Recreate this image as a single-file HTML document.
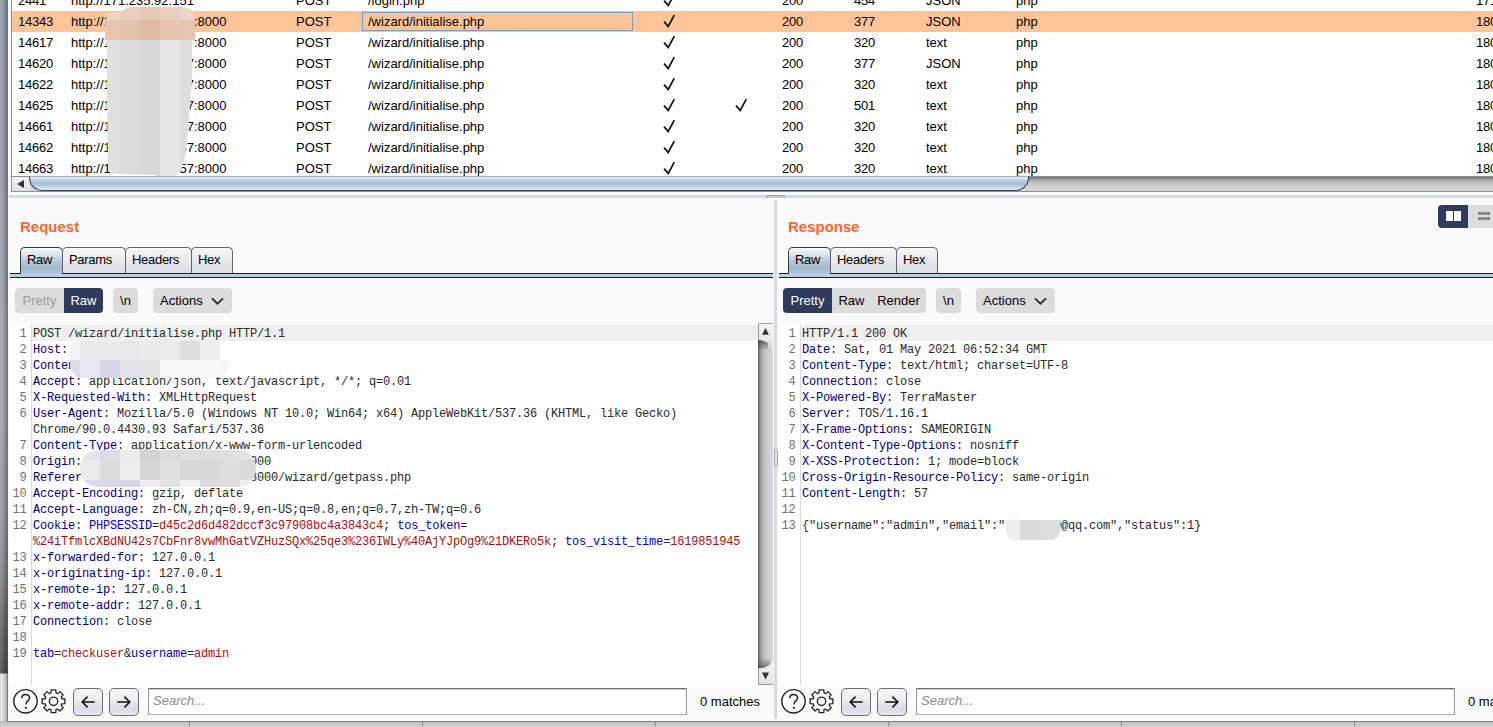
<!DOCTYPE html>
<html>
<head>
<meta charset="utf-8">
<title>Burp Suite</title>
<style>
*{box-sizing:border-box;margin:0;padding:0}
html,body{width:1493px;height:727px;overflow:hidden}
body{position:relative;background:#fafafa;font-family:"Liberation Sans",sans-serif;font-size:13px;color:#000}
.abs{position:absolute}
/* desktop strip on the left & bottom */
#leftstrip{left:0;top:0;width:8px;height:727px;background:linear-gradient(to right,rgba(255,255,255,.14) 0,rgba(255,255,255,.06) 3px,rgba(0,0,0,.12) 5px,rgba(0,0,0,.24) 8px),linear-gradient(to bottom,#8e98a8 0,#929baa 180px,#98a0ae 400px,#9398a3 500px,#86898f 560px,#737479 600px,#5b5a5d 640px,#4c4a4c 673px,#dcdcd8 674px,#dcdcd8 727px)}
#winedge{left:7px;top:0;width:1px;height:722px;background:linear-gradient(to bottom,#6c717a 0,#6c717a 500px,#555 640px,#4a4a4a 673px,#777 674px)}
#bottomstrip{left:0;top:721px;width:1493px;height:6px;background:linear-gradient(to bottom,#bcbeb8,#cfd2cc)}
#bottomline{left:7px;top:721px;width:1486px;height:1px;background:#7e7e7e}
.bsep{top:722px;width:1px;height:4px;background:#8a8a8a}
/* table */
#table{left:11px;top:0;width:1482px;height:176px;background:#fff;border-left:1px solid #8a8f98;overflow:hidden}
.row{position:absolute;left:0;width:1483px;height:21px;line-height:21px;white-space:nowrap}
.row.sel{background:#ffc599}
.row span{position:absolute;top:0}
.c1{left:6px}.c2{left:59px}.c3{left:284px}.c4{left:356px}.c5{left:651px}.c6{left:723px}.c7{left:770px}.c8{left:842px}.c9{left:914px}.c10{left:1004px}.c11{left:1464px}.c1,.c7,.c8,.c11{letter-spacing:-0.25px}
.ck{position:absolute;left:0;top:3px}
#focus{left:362px;top:12px;width:271px;height:19px;border:1px solid #7a9ccc}
.blob{border-radius:14px}
/* h scrollbar */
#hsb{left:11px;top:176px;width:1482px;height:16px;border:1px solid #8e8f96;border-right:0;background:linear-gradient(to bottom,#707075 0,#b4b5ba 4px,#cfd0d4 9px,#d6d7db 14px)}
#hsbbtn{left:12px;top:177px;width:18px;height:14px;background:linear-gradient(to bottom,#f4f4f6,#e0e1e6)}
#hsbthumb{left:29px;top:176px;width:1000px;height:15px;border:1px solid #33475c;border-top-color:#9fb0c0;border-radius:0 0 14px 14px/0 0 13px 13px;background:linear-gradient(to bottom,#e4edf4 0,#b7c9dc 4px,#a9bed4 7px,#cfdeea 11px,#eaf3fa 14px)}
#hsbarrow{left:17px;top:180px;width:0;height:0;border-right:7px solid #333;border-top:4px solid transparent;border-bottom:4px solid transparent}
#split1{left:9px;top:195px;width:1484px;height:3px;background:#d6dae3}
/* panes */
.title{font-weight:bold;font-size:15px;color:#ff6633;line-height:18px}
.tab{position:absolute;top:247px;height:26px;border:1px solid #5e646c;border-bottom:0;border-radius:5px 5px 0 0;background:linear-gradient(to bottom,#f6f6f8 0,#e9eaef 50%,#dcdee5 100%);line-height:24px;text-align:left;padding-left:6px;font-size:13px;letter-spacing:-0.3px;box-shadow:inset 0 1px 0 rgba(255,255,255,.8)}
.tab.on{border-color:#2a3a4a;background:linear-gradient(to bottom,#f6f8fb 0,#dbe4ec 25%,#b7c8d9 50%,#a3b8cd 80%,#b4c9de 100%);height:27px}
.tabline{position:absolute;top:273px;height:5px;border-top:1px solid #15202c;border-bottom:1px solid #15202c;background:#b9cfe6}
.btn{position:absolute;top:288px;height:25px;line-height:25px;background:#dcdcdc;border-radius:4px;font-size:13px;text-align:center;color:#000;white-space:nowrap}
.btn.dark{background:#303a5c;color:#fff}
.btn.dis{color:#9a9a9a}
/* editor */
.ed{position:absolute;background:#fff;overflow:hidden}
.ed .hl{position:absolute;left:22px;right:0;top:1px;height:16px;background:#efefef}
.ed .gsep{position:absolute;left:21px;top:0;width:1px;bottom:0;background:#dcdcdc}
.ln{position:absolute;left:0;width:16.5px;text-align:right;color:#707070;margin-top:1px}
.code,.ln{font-family:"Liberation Mono",monospace;font-size:12px;letter-spacing:-0.2px;line-height:16px;white-space:pre;height:16px}
.code{position:absolute;left:23px;color:#2a2a2a;margin-top:1px}
.h{color:#00007c}.b{color:#0000cc}.r{color:#a31212}
/* v scrollbar */
.vsb{position:absolute;width:14px;background:linear-gradient(to right,#77777c 0,#b4b5ba 4px,#cfd0d4 9px,#d6d7db 13px)}
/* bottom bar */
.navbtn{position:absolute;top:688px;width:30px;height:28px;border:1px solid #6a6f78;border-radius:5px;background:linear-gradient(to bottom,#f6f7f9 0,#eceef2 40%,#d9dce4 75%,#e6e8ee 100%)}
.search{position:absolute;top:688px;height:27px;border:1px solid #9c9c9c;border-top-color:#707070;border-bottom-color:#aaa;background:#fff;font-style:italic;color:#8c8c8c;line-height:24px;padding-left:4px;font-size:13px;box-shadow:inset 0 1px 1px #c4c4c4}
.matches{position:absolute;top:688px;line-height:27px;font-size:13px;white-space:nowrap}
</style>
</head>
<body>
<div id="leftstrip" class="abs"></div>
<div id="bottomstrip" class="abs"></div>
<div id="winedge" class="abs"></div>
<div id="bottomline" class="abs"></div>
<div class="abs bsep" style="left:189px"></div>
<div class="abs bsep" style="left:422px"></div>
<div class="abs bsep" style="left:655px"></div>
<div class="abs bsep" style="left:888px"></div>
<div class="abs bsep" style="left:1121px"></div>
<div class="abs bsep" style="left:1354px"></div>

<!-- proxy history table -->
<div id="table" class="abs">
  <div class="row" style="top:-10px"><span class="c1">2441</span><span class="c2">http://171.235.92.151</span><span class="c3">POST</span><span class="c4">/login.php</span><span class="c5"><svg class="ck" width="13" height="14" viewBox="0 0 13 14"><path d="M1 7.6 L5.2 12.4 L11.3 1.2" fill="none" stroke="#111" stroke-width="1.7" stroke-linejoin="miter"/></svg></span><span class="c7">200</span><span class="c8">454</span><span class="c9">JSON</span><span class="c10">php</span><span class="c11">171</span></div>
  <div class="row sel" style="top:11px"><span class="c1">14343</span><span class="c2">http://171.235.92.157:8000</span><span class="c3">POST</span><span class="c4">/wizard/initialise.php</span><span class="c5"><svg class="ck" width="13" height="14" viewBox="0 0 13 14"><path d="M1 7.6 L5.2 12.4 L11.3 1.2" fill="none" stroke="#111" stroke-width="1.7" stroke-linejoin="miter"/></svg></span><span class="c7">200</span><span class="c8">377</span><span class="c9">JSON</span><span class="c10">php</span><span class="c11">180</span></div>
  <div class="row" style="top:32px"><span class="c1">14617</span><span class="c2">http://171.235.92.157:8000</span><span class="c3">POST</span><span class="c4">/wizard/initialise.php</span><span class="c5"><svg class="ck" width="13" height="14" viewBox="0 0 13 14"><path d="M1 7.6 L5.2 12.4 L11.3 1.2" fill="none" stroke="#111" stroke-width="1.7" stroke-linejoin="miter"/></svg></span><span class="c7">200</span><span class="c8">320</span><span class="c9">text</span><span class="c10">php</span><span class="c11">180</span></div>
  <div class="row" style="top:53px"><span class="c1">14620</span><span class="c2">http://171.235.92.157:8000</span><span class="c3">POST</span><span class="c4">/wizard/initialise.php</span><span class="c5"><svg class="ck" width="13" height="14" viewBox="0 0 13 14"><path d="M1 7.6 L5.2 12.4 L11.3 1.2" fill="none" stroke="#111" stroke-width="1.7" stroke-linejoin="miter"/></svg></span><span class="c7">200</span><span class="c8">377</span><span class="c9">JSON</span><span class="c10">php</span><span class="c11">180</span></div>
  <div class="row" style="top:74px"><span class="c1">14622</span><span class="c2">http://171.235.92.157:8000</span><span class="c3">POST</span><span class="c4">/wizard/initialise.php</span><span class="c5"><svg class="ck" width="13" height="14" viewBox="0 0 13 14"><path d="M1 7.6 L5.2 12.4 L11.3 1.2" fill="none" stroke="#111" stroke-width="1.7" stroke-linejoin="miter"/></svg></span><span class="c7">200</span><span class="c8">320</span><span class="c9">text</span><span class="c10">php</span><span class="c11">180</span></div>
  <div class="row" style="top:95px"><span class="c1">14625</span><span class="c2">http://171.235.92.157:8000</span><span class="c3">POST</span><span class="c4">/wizard/initialise.php</span><span class="c5"><svg class="ck" width="13" height="14" viewBox="0 0 13 14"><path d="M1 7.6 L5.2 12.4 L11.3 1.2" fill="none" stroke="#111" stroke-width="1.7" stroke-linejoin="miter"/></svg></span><span class="c6"><svg class="ck" width="13" height="14" viewBox="0 0 13 14"><path d="M1 7.6 L5.2 12.4 L11.3 1.2" fill="none" stroke="#111" stroke-width="1.7" stroke-linejoin="miter"/></svg></span><span class="c7">200</span><span class="c8">501</span><span class="c9">text</span><span class="c10">php</span><span class="c11">180</span></div>
  <div class="row" style="top:116px"><span class="c1">14661</span><span class="c2">http://171.235.92.157:8000</span><span class="c3">POST</span><span class="c4">/wizard/initialise.php</span><span class="c5"><svg class="ck" width="13" height="14" viewBox="0 0 13 14"><path d="M1 7.6 L5.2 12.4 L11.3 1.2" fill="none" stroke="#111" stroke-width="1.7" stroke-linejoin="miter"/></svg></span><span class="c7">200</span><span class="c8">320</span><span class="c9">text</span><span class="c10">php</span><span class="c11">180</span></div>
  <div class="row" style="top:137px"><span class="c1">14662</span><span class="c2">http://171.235.92.157:8000</span><span class="c3">POST</span><span class="c4">/wizard/initialise.php</span><span class="c5"><svg class="ck" width="13" height="14" viewBox="0 0 13 14"><path d="M1 7.6 L5.2 12.4 L11.3 1.2" fill="none" stroke="#111" stroke-width="1.7" stroke-linejoin="miter"/></svg></span><span class="c7">200</span><span class="c8">320</span><span class="c9">text</span><span class="c10">php</span><span class="c11">180</span></div>
  <div class="row" style="top:158px"><span class="c1">14663</span><span class="c2">http://171.235.92.157:8000</span><span class="c3">POST</span><span class="c4">/wizard/initialise.php</span><span class="c5"><svg class="ck" width="13" height="14" viewBox="0 0 13 14"><path d="M1 7.6 L5.2 12.4 L11.3 1.2" fill="none" stroke="#111" stroke-width="1.7" stroke-linejoin="miter"/></svg></span><span class="c7">200</span><span class="c8">320</span><span class="c9">text</span><span class="c10">php</span><span class="c11">180</span></div>
</div>
<div id="focus" class="abs"></div>
<!-- redaction blobs over host column -->
<div class="abs" style="left:105px;top:7px;width:90px;height:171px;overflow:hidden;clip-path:polygon(25px 0,80px 0,87px 3px,90px 10px,90px 33px,87px 35px,87px 73px,85px 100px,83px 123px,80px 150px,76px 164px,68px 171px,55px 171px,50px 168px,10px 167px,3px 160px,2px 100px,2px 35px,0 33px,0 14px,4px 6px,15px 5px)"><i style="position:absolute;left:0px;top:0px;width:15px;height:13px;background:#ecd6c8"></i><i style="position:absolute;left:15px;top:0px;width:20px;height:13px;background:#e8cfbf"></i><i style="position:absolute;left:35px;top:0px;width:20px;height:13px;background:#e6cab8"></i><i style="position:absolute;left:55px;top:0px;width:20px;height:13px;background:#e8cfbf"></i><i style="position:absolute;left:75px;top:0px;width:15px;height:13px;background:#ecd6c8"></i><i style="position:absolute;left:0px;top:13px;width:15px;height:12px;background:#e6c6b0"></i><i style="position:absolute;left:15px;top:13px;width:20px;height:12px;background:#e4c2ab"></i><i style="position:absolute;left:35px;top:13px;width:20px;height:12px;background:#e0baa3"></i><i style="position:absolute;left:55px;top:13px;width:20px;height:12px;background:#e6c4ad"></i><i style="position:absolute;left:75px;top:13px;width:15px;height:12px;background:#e4c6b2"></i><i style="position:absolute;left:0px;top:25px;width:15px;height:8px;background:#e6c6b0"></i><i style="position:absolute;left:15px;top:25px;width:20px;height:8px;background:#e4c2ab"></i><i style="position:absolute;left:35px;top:25px;width:20px;height:8px;background:#e0baa3"></i><i style="position:absolute;left:55px;top:25px;width:20px;height:8px;background:#e6c4ad"></i><i style="position:absolute;left:75px;top:25px;width:15px;height:8px;background:#e4c6b2"></i><i style="position:absolute;left:0px;top:33px;width:2px;height:138px;background:#fff"></i><i style="position:absolute;left:2px;top:33px;width:13px;height:138px;background:#e0e0e2"></i><i style="position:absolute;left:15px;top:33px;width:20px;height:138px;background:#dcdcde"></i><i style="position:absolute;left:35px;top:33px;width:20px;height:138px;background:#d8d8da"></i><i style="position:absolute;left:55px;top:33px;width:20px;height:138px;background:#e6e6e8"></i><i style="position:absolute;left:75px;top:33px;width:12px;height:138px;background:#dedede"></i><i style="position:absolute;left:87px;top:33px;width:3px;height:138px;background:#fff"></i></div>

<!-- horizontal scrollbar -->
<div id="hsb" class="abs"></div>
<div id="hsbbtn" class="abs"></div>
<div id="hsbthumb" class="abs"></div>
<div id="hsbarrow" class="abs"></div>
<div id="split1" class="abs"></div>

<!-- request pane -->
<div class="abs title" style="left:20px;top:218px">Request</div>
<div class="tabline" style="left:10px;width:763px"></div>
<div class="tab on" style="left:20px;width:43px">Raw</div>
<div class="tab" style="left:62px;width:64px">Params</div>
<div class="tab" style="left:125px;width:67px">Headers</div>
<div class="tab" style="left:191px;width:42px">Hex</div>
<div class="btn dis" style="left:15px;width:49px;border-radius:4px 0 0 4px">Pretty</div>
<div class="btn dark" style="left:64px;width:39px;border-radius:0 4px 4px 0">Raw</div>
<div class="btn" style="left:113px;width:25px">\n</div>
<div class="btn" style="left:153px;width:79px;text-align:left;padding-left:7px">Actions<span style="position:relative;left:6px"><svg width="17" height="10" viewBox="0 0 17 10" style="position:absolute;top:3px"><path d="M3 2.4 L8.5 7.7 L14 2.4" fill="none" stroke="#2a2a2a" stroke-width="1.8"/></svg></span></div>
<div class="ed" id="reqed" style="left:10px;top:324px;width:748px;height:361px">
  <div class="hl"></div><div class="gsep"></div>
  <div class="ln" style="top:1px">1</div>
  <div class="code" style="top:1px">POST /wizard/initialise.php HTTP/1.1</div>
  <div class="ln" style="top:17px">2</div>
  <div class="code" style="top:17px"><span class="h">Host</span>: 171.235.92.157:8000</div>
  <div class="ln" style="top:33px">3</div>
  <div class="code" style="top:33px"><span class="h">Content-Length</span>: 27</div>
  <div class="ln" style="top:49px">4</div>
  <div class="code" style="top:49px"><span class="h">Accept</span>: application/json, text/javascript, */*; q=0.01</div>
  <div class="ln" style="top:65px">5</div>
  <div class="code" style="top:65px"><span class="h">X-Requested-With</span>: XMLHttpRequest</div>
  <div class="ln" style="top:81px">6</div>
  <div class="code" style="top:81px"><span class="h">User-Agent</span>: Mozilla/5.0 (Windows NT 10.0; Win64; x64) AppleWebKit/537.36 (KHTML, like Gecko)</div>
  <div class="code" style="top:97px">Chrome/90.0.4430.93 Safari/537.36</div>
  <div class="ln" style="top:113px">7</div>
  <div class="code" style="top:113px"><span class="h">Content-Type</span>: application/x-www-form-urlencoded</div>
  <div class="ln" style="top:129px">8</div>
  <div class="code" style="top:129px"><span class="h">Origin</span>: http://171.235.92.157:8000</div>
  <div class="ln" style="top:145px">9</div>
  <div class="code" style="top:145px"><span class="h">Referer</span>: http://171.235.92.157:8000/wizard/getpass.php</div>
  <div class="ln" style="top:161px">10</div>
  <div class="code" style="top:161px"><span class="h">Accept-Encoding</span>: gzip, deflate</div>
  <div class="ln" style="top:177px">11</div>
  <div class="code" style="top:177px"><span class="h">Accept-Language</span>: zh-CN,zh;q=0.9,en-US;q=0.8,en;q=0.7,zh-TW;q=0.6</div>
  <div class="ln" style="top:193px">12</div>
  <div class="code" style="top:193px"><span class="h">Cookie</span>: <span class="b">PHPSESSID</span>=<span class="r">d45c2d6d482dccf3c97908bc4a3843c4</span>; <span class="b">tos_token</span>=</div>
  <div class="code" style="top:209px"><span class="r">%24iTfmlcXBdNU42s7CbFnr8vwMhGatVZHuzSQx%25qe3%236IWLy%40AjYJpOg9%21DKERo5k</span>; <span class="b">tos_visit_time</span>=<span class="r">1619851945</span></div>
  <div class="ln" style="top:225px">13</div>
  <div class="code" style="top:225px"><span class="h">x-forwarded-for</span>: 127.0.0.1</div>
  <div class="ln" style="top:241px">14</div>
  <div class="code" style="top:241px"><span class="h">x-originating-ip</span>: 127.0.0.1</div>
  <div class="ln" style="top:257px">15</div>
  <div class="code" style="top:257px"><span class="h">x-remote-ip</span>: 127.0.0.1</div>
  <div class="ln" style="top:273px">16</div>
  <div class="code" style="top:273px"><span class="h">x-remote-addr</span>: 127.0.0.1</div>
  <div class="ln" style="top:289px">17</div>
  <div class="code" style="top:289px"><span class="h">Connection</span>: close</div>
  <div class="ln" style="top:305px">18</div>
  <div class="ln" style="top:321px">19</div>
  <div class="code" style="top:321px"><span class="b">tab</span>=<span class="r">checkuser</span>&amp;<span class="b">username</span>=<span class="r">admin</span></div>
</div>
<!-- request redaction blobs -->
<div class="abs" style="left:70px;top:341px;width:161px;height:37px;border-radius:12px 18px 18px 14px;overflow:hidden"><i style="position:absolute;left:0px;top:0px;width:10px;height:19px;background:#f3f3f3"></i><i style="position:absolute;left:10px;top:0px;width:20px;height:19px;background:#e8e8e8"></i><i style="position:absolute;left:30px;top:0px;width:20px;height:19px;background:#e9e9e9"></i><i style="position:absolute;left:50px;top:0px;width:20px;height:19px;background:#e8e8e8"></i><i style="position:absolute;left:70px;top:0px;width:20px;height:19px;background:#eaeaea"></i><i style="position:absolute;left:90px;top:0px;width:20px;height:19px;background:#ebebeb"></i><i style="position:absolute;left:110px;top:0px;width:20px;height:19px;background:#dedede"></i><i style="position:absolute;left:130px;top:0px;width:20px;height:19px;background:#eeeeee"></i><i style="position:absolute;left:150px;top:0px;width:11px;height:19px;background:#ffffff"></i><i style="position:absolute;left:0px;top:19px;width:10px;height:18px;background:#dcdcec"></i><i style="position:absolute;left:10px;top:19px;width:20px;height:18px;background:#e6e6f2"></i><i style="position:absolute;left:30px;top:19px;width:20px;height:18px;background:#d6d6e6"></i><i style="position:absolute;left:50px;top:19px;width:20px;height:18px;background:#e2e2ec"></i><i style="position:absolute;left:70px;top:19px;width:20px;height:18px;background:#e4e4e4"></i><i style="position:absolute;left:90px;top:19px;width:20px;height:18px;background:#f7f7f7"></i><i style="position:absolute;left:110px;top:19px;width:20px;height:18px;background:#f8f8f8"></i><i style="position:absolute;left:130px;top:19px;width:20px;height:18px;background:#f8f8f8"></i><i style="position:absolute;left:150px;top:19px;width:11px;height:18px;background:#f6f6f6"></i></div>
<div class="abs" style="left:80px;top:450px;width:176px;height:37px;border-radius:18px;overflow:hidden"><i style="position:absolute;left:0px;top:0px;width:20px;height:10px;background:#e4e4f0"></i><i style="position:absolute;left:20px;top:0px;width:20px;height:10px;background:#dcdcea"></i><i style="position:absolute;left:40px;top:0px;width:20px;height:10px;background:#ececec"></i><i style="position:absolute;left:60px;top:0px;width:20px;height:10px;background:#d2d2d2"></i><i style="position:absolute;left:80px;top:0px;width:20px;height:10px;background:#dcdcdc"></i><i style="position:absolute;left:100px;top:0px;width:20px;height:10px;background:#dedede"></i><i style="position:absolute;left:120px;top:0px;width:20px;height:10px;background:#dddddd"></i><i style="position:absolute;left:140px;top:0px;width:20px;height:10px;background:#e0e0e0"></i><i style="position:absolute;left:160px;top:0px;width:16px;height:10px;background:#e4e4e4"></i><i style="position:absolute;left:0px;top:10px;width:20px;height:20px;background:#ececec"></i><i style="position:absolute;left:20px;top:10px;width:20px;height:20px;background:#dcdcdc"></i><i style="position:absolute;left:40px;top:10px;width:20px;height:20px;background:#ededed"></i><i style="position:absolute;left:60px;top:10px;width:20px;height:20px;background:#d6d6d6"></i><i style="position:absolute;left:80px;top:10px;width:20px;height:20px;background:#e0e0e0"></i><i style="position:absolute;left:100px;top:10px;width:20px;height:20px;background:#d8d8d8"></i><i style="position:absolute;left:120px;top:10px;width:20px;height:20px;background:#d8d8d8"></i><i style="position:absolute;left:140px;top:10px;width:20px;height:20px;background:#dedede"></i><i style="position:absolute;left:160px;top:10px;width:16px;height:20px;background:#dadada"></i><i style="position:absolute;left:0px;top:30px;width:20px;height:7px;background:#dcdcec"></i><i style="position:absolute;left:20px;top:30px;width:20px;height:7px;background:#d8d8e8"></i><i style="position:absolute;left:40px;top:30px;width:20px;height:7px;background:#d6d6e6"></i><i style="position:absolute;left:60px;top:30px;width:20px;height:7px;background:#eeeeee"></i><i style="position:absolute;left:80px;top:30px;width:20px;height:7px;background:#e2e2e2"></i><i style="position:absolute;left:100px;top:30px;width:20px;height:7px;background:#f2f2f2"></i><i style="position:absolute;left:120px;top:30px;width:20px;height:7px;background:#dcdcdc"></i><i style="position:absolute;left:140px;top:30px;width:20px;height:7px;background:#dedede"></i><i style="position:absolute;left:160px;top:30px;width:16px;height:7px;background:#eeeeee"></i></div>
<svg class="abs" style="left:758px;top:323px" width="15" height="362" viewBox="0 0 15 362">
  <defs>
    <linearGradient id="trk" x1="0" y1="0" x2="1" y2="0"><stop offset="0" stop-color="#55565a"/><stop offset="0.1" stop-color="#808186"/><stop offset="0.22" stop-color="#a2a3a8"/><stop offset="0.4" stop-color="#bbbcc1"/><stop offset="0.65" stop-color="#cccdd2"/><stop offset="1" stop-color="#d6d8de"/></linearGradient>
    <linearGradient id="cap" x1="0" y1="0" x2="0" y2="1"><stop offset="0" stop-color="#f4f4f6"/><stop offset="1" stop-color="#e1e2e7"/></linearGradient>
    <linearGradient id="shd" x1="0" y1="0" x2="0" y2="1"><stop offset="0" stop-color="#3c3d42" stop-opacity="0.75"/><stop offset="1" stop-color="#3c3d42" stop-opacity="0"/></linearGradient>
    <linearGradient id="shu" x1="0" y1="1" x2="0" y2="0"><stop offset="0" stop-color="#3c3d42" stop-opacity="0.6"/><stop offset="1" stop-color="#3c3d42" stop-opacity="0"/></linearGradient>
  </defs>
  <rect x="0" y="0" width="15" height="362" fill="url(#trk)"/>
  <path d="M0 17 H10 V27 Q6 27 0 27 Z" fill="url(#shd)"/>
  <path d="M0 335 H12 V345 H0 Z" fill="url(#shu)"/>
  <path d="M0 0 H15 V26 C11 20 7 17.2 0 17 Z" fill="url(#cap)"/>
  <path d="M0 362 H15 V337 C12 343 7 345.6 0 345.6 Z" fill="url(#cap)"/>
  <path d="M0.5 17 V0.5 H15" fill="none" stroke="#9c9da3" stroke-width="1"/>
  <path d="M0.5 345.6 V361.5 H15" fill="none" stroke="#9c9da3" stroke-width="1"/>
  <path d="M4 11.8 L11 11.8 L7.5 5 Z" fill="#333"/>
  <path d="M4 349.6 L11 349.6 L7.5 356.4 Z" fill="#333"/>
</svg>
<svg class="abs" style="left:13px;top:688px" width="58" height="27" viewBox="0 0 58 27">
  <circle cx="12.5" cy="13.3" r="11.7" fill="none" stroke="#222" stroke-width="1.4"/>
  <path d="M8.8 10.2 C8.8 5.4 16.6 5.4 16.6 9.9 C16.6 12.9 12.8 13 12.8 16.6" fill="none" stroke="#222" stroke-width="1.5"/>
  <circle cx="12.8" cy="19.8" r="1.1" fill="#222"/>
  <g transform="translate(40.5 13.3)" fill="none" stroke="#222" stroke-width="1.3" stroke-linejoin="round">
    <circle r="4.2"/>
    <path d="M-2.54,-8.32 L-2.31,-11.37 L2.31,-11.37 L2.54,-8.32 L4.08,-7.68 L6.40,-9.67 L9.67,-6.40 L7.68,-4.08 L8.32,-2.54 L11.37,-2.31 L11.37,2.31 L8.32,2.54 L7.68,4.08 L9.67,6.40 L6.40,9.67 L4.08,7.68 L2.54,8.32 L2.31,11.37 L-2.31,11.37 L-2.54,8.32 L-4.08,7.68 L-6.40,9.67 L-9.67,6.40 L-7.68,4.08 L-8.32,2.54 L-11.37,2.31 L-11.37,-2.31 L-8.32,-2.54 L-7.68,-4.08 L-9.67,-6.40 L-6.40,-9.67 L-4.08,-7.68 Z"/>
  </g>
</svg>
<div class="navbtn" style="left:73px"><svg width="28" height="26" viewBox="0 0 28 26"><path d="M20.8 13 H8.4 M13.6 7.6 L8.2 13 L13.6 18.4" fill="none" stroke="#111" stroke-width="1.6"/></svg></div>
<div class="navbtn" style="left:109px"><svg width="28" height="26" viewBox="0 0 28 26"><path d="M7.2 13 H19.6 M14.4 7.6 L19.8 13 L14.4 18.4" fill="none" stroke="#111" stroke-width="1.6"/></svg></div>
<div class="search" style="left:148px;width:539px">Search...</div>
<div class="matches" style="left:700px">0 matches</div>
<!-- splitter -->
<div class="abs" style="left:774px;top:200px;width:3px;height:519px;background:#d6dae3"></div>
<div class="abs" style="left:766px;top:195px;width:19px;height:3px;border:1px solid #9a9eac;border-bottom:0;border-radius:3px 3px 0 0;background:#c9ccd6"></div>
<div class="abs" style="left:774px;top:449px;width:4px;height:18px;border:1px solid #a4a8b6;border-radius:2px;background:#e2e5ec"></div>
<!-- response pane -->
<div class="abs title" style="left:788px;top:218px">Response</div>
<div class="tabline" style="left:779px;width:714px"></div>
<div class="tab on" style="left:788px;width:43px">Raw</div>
<div class="tab" style="left:830px;width:67px">Headers</div>
<div class="tab" style="left:896px;width:42px">Hex</div>
<div class="btn dark" style="left:783px;width:49px;border-radius:4px 0 0 4px">Pretty</div>
<div class="btn" style="left:832px;width:39px;border-radius:0">Raw</div>
<div class="btn" style="left:871px;width:55px;border-radius:0 4px 4px 0">Render</div>
<div class="btn" style="left:936px;width:25px">\n</div>
<div class="btn" style="left:976px;width:79px;text-align:left;padding-left:7px">Actions<span style="position:relative;left:6px"><svg width="17" height="10" viewBox="0 0 17 10" style="position:absolute;top:3px"><path d="M3 2.4 L8.5 7.7 L14 2.4" fill="none" stroke="#2a2a2a" stroke-width="1.8"/></svg></span></div>
<div class="ed" id="resed" style="left:779px;top:324px;width:714px;height:361px">
  <div class="hl"></div><div class="gsep"></div>
  <div class="ln" style="top:1px">1</div>
  <div class="code" style="top:1px">HTTP/1.1 200 OK</div>
  <div class="ln" style="top:17px">2</div>
  <div class="code" style="top:17px"><span class="h">Date</span>: Sat, 01 May 2021 06:52:34 GMT</div>
  <div class="ln" style="top:33px">3</div>
  <div class="code" style="top:33px"><span class="h">Content-Type</span>: text/html; charset=UTF-8</div>
  <div class="ln" style="top:49px">4</div>
  <div class="code" style="top:49px"><span class="h">Connection</span>: close</div>
  <div class="ln" style="top:65px">5</div>
  <div class="code" style="top:65px"><span class="h">X-Powered-By</span>: TerraMaster</div>
  <div class="ln" style="top:81px">6</div>
  <div class="code" style="top:81px"><span class="h">Server</span>: TOS/1.16.1</div>
  <div class="ln" style="top:97px">7</div>
  <div class="code" style="top:97px"><span class="h">X-Frame-Options</span>: SAMEORIGIN</div>
  <div class="ln" style="top:113px">8</div>
  <div class="code" style="top:113px"><span class="h">X-Content-Type-Options</span>: nosniff</div>
  <div class="ln" style="top:129px">9</div>
  <div class="code" style="top:129px"><span class="h">X-XSS-Protection</span>: 1; mode=block</div>
  <div class="ln" style="top:145px">10</div>
  <div class="code" style="top:145px"><span class="h">Cross-Origin-Resource-Policy</span>: same-origin</div>
  <div class="ln" style="top:161px">11</div>
  <div class="code" style="top:161px"><span class="h">Content-Length</span>: 57</div>
  <div class="ln" style="top:177px">12</div>
  <div class="ln" style="top:193px">13</div>
  <div class="code" style="top:193px">{"username":"admin","email":"12345670@qq.com","status":1}</div>
</div>
<div class="abs" style="left:1009px;top:511px;width:11px;height:9px;background:#fcfcfc;border-radius:9px 0 0 0"></div><div class="abs" style="left:1006px;top:520px;width:54px;height:20px;border-radius:0 0 9px 9px;overflow:hidden"><i style="position:absolute;left:0px;top:0px;width:14px;height:20px;background:#eeeeee"></i><i style="position:absolute;left:14px;top:0px;width:20px;height:20px;background:#dadada"></i><i style="position:absolute;left:34px;top:0px;width:20px;height:20px;background:#dedede"></i></div>
<svg class="abs" style="left:781px;top:688px" width="58" height="27" viewBox="0 0 58 27">
  <circle cx="12.5" cy="13.3" r="11.7" fill="none" stroke="#222" stroke-width="1.4"/>
  <path d="M8.8 10.2 C8.8 5.4 16.6 5.4 16.6 9.9 C16.6 12.9 12.8 13 12.8 16.6" fill="none" stroke="#222" stroke-width="1.5"/>
  <circle cx="12.8" cy="19.8" r="1.1" fill="#222"/>
  <g transform="translate(40.5 13.3)" fill="none" stroke="#222" stroke-width="1.3" stroke-linejoin="round">
    <circle r="4.2"/>
    <path d="M-2.54,-8.32 L-2.31,-11.37 L2.31,-11.37 L2.54,-8.32 L4.08,-7.68 L6.40,-9.67 L9.67,-6.40 L7.68,-4.08 L8.32,-2.54 L11.37,-2.31 L11.37,2.31 L8.32,2.54 L7.68,4.08 L9.67,6.40 L6.40,9.67 L4.08,7.68 L2.54,8.32 L2.31,11.37 L-2.31,11.37 L-2.54,8.32 L-4.08,7.68 L-6.40,9.67 L-9.67,6.40 L-7.68,4.08 L-8.32,2.54 L-11.37,2.31 L-11.37,-2.31 L-8.32,-2.54 L-7.68,-4.08 L-9.67,-6.40 L-6.40,-9.67 L-4.08,-7.68 Z"/>
  </g>
</svg>
<div class="navbtn" style="left:841px"><svg width="28" height="26" viewBox="0 0 28 26"><path d="M20.8 13 H8.4 M13.6 7.6 L8.2 13 L13.6 18.4" fill="none" stroke="#111" stroke-width="1.6"/></svg></div>
<div class="navbtn" style="left:877px"><svg width="28" height="26" viewBox="0 0 28 26"><path d="M7.2 13 H19.6 M14.4 7.6 L19.8 13 L14.4 18.4" fill="none" stroke="#111" stroke-width="1.6"/></svg></div>
<div class="search" style="left:916px;width:539px">Search...</div>
<div class="matches" style="left:1468px">0 matches</div>
<!-- layout toggle -->
<div class="abs" style="left:1438px;top:205px;width:30px;height:23px;background:#303a5c;border-radius:4px 0 0 4px"></div>
<div class="abs" style="left:1446px;top:211px;width:7px;height:10px;background:#fff"></div>
<div class="abs" style="left:1454px;top:211px;width:7px;height:10px;background:#fff"></div>
<div class="abs" style="left:1468px;top:205px;width:25px;height:23px;background:#dcdcdc"></div>
<div class="abs" style="left:1478px;top:212px;width:12px;height:3px;background:#8a8a8a"></div>
<div class="abs" style="left:1478px;top:217px;width:12px;height:3px;background:#8a8a8a"></div>

</body>
</html>
